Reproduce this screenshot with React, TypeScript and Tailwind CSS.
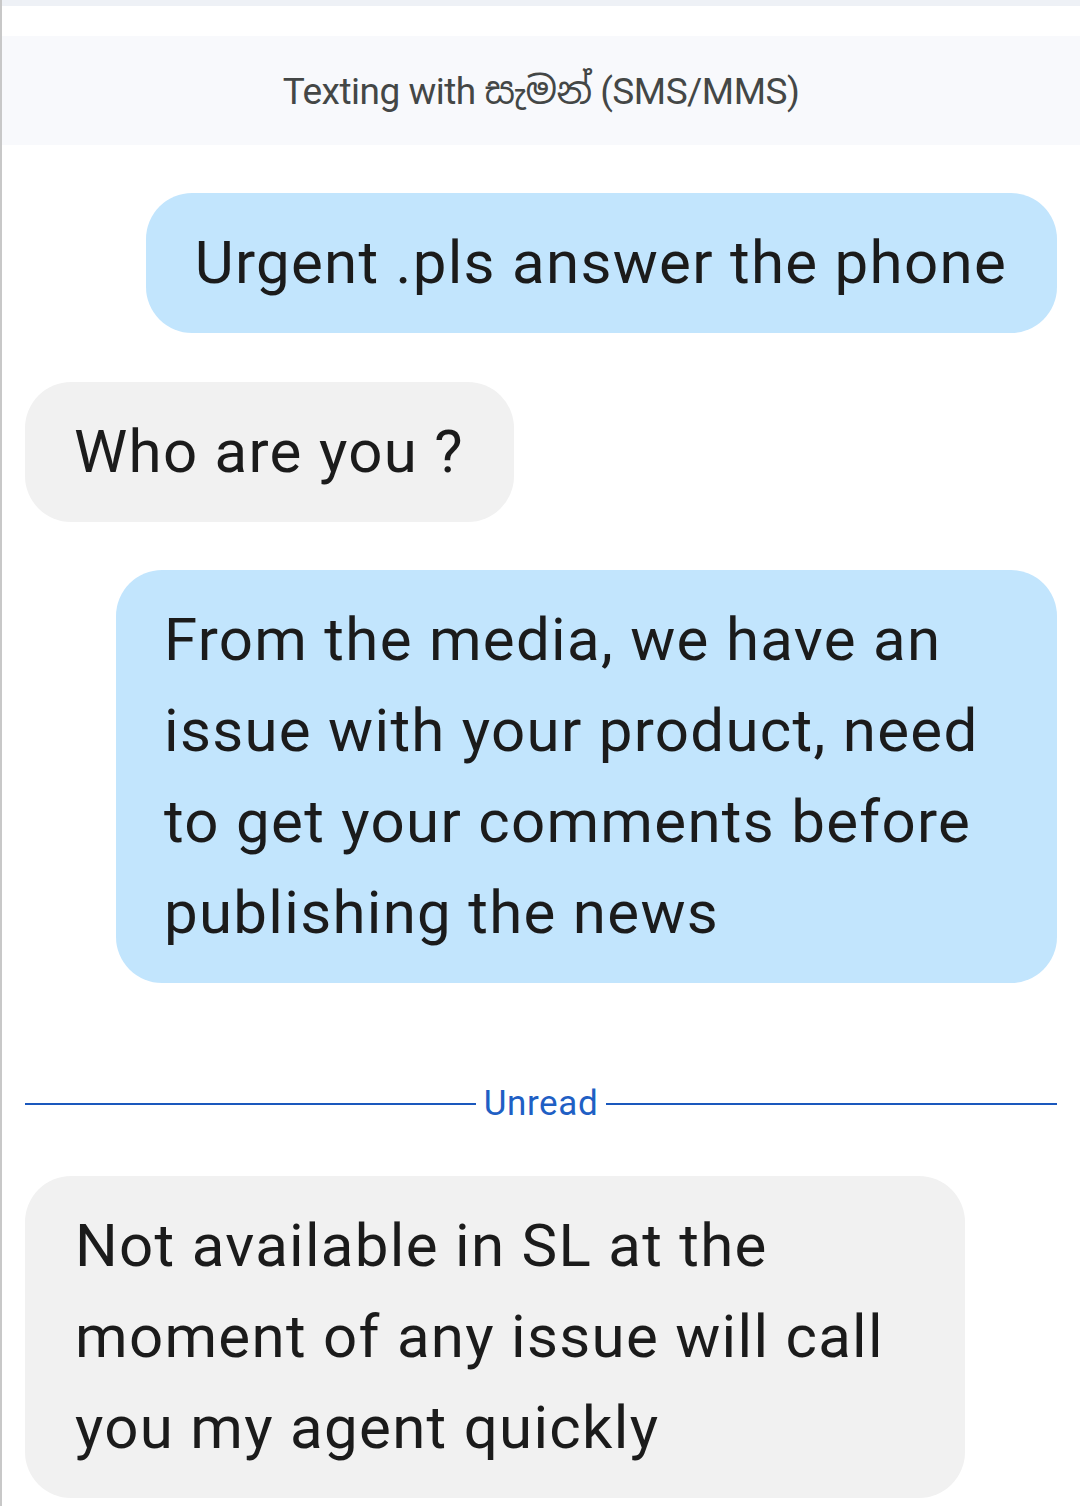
import React from 'react'

const font = { fontFamily: 'Roboto, "Noto Sans", "Noto Sans Sinhala", sans-serif' }

const Bubble = ({ mine, children, className = '' }: { mine?: boolean; children: React.ReactNode; className?: string }) => (
    <div className={`flex ${mine ? 'justify-end' : 'justify-start'}`}>
        <div
            className={`rounded-[46px] pt-[24px] pb-[25px] text-[60px] leading-[91px] tracking-[1.3px] text-[#1b1b1b] whitespace-nowrap ${
                mine ? 'bg-[#c2e5fd]' : 'bg-[#f1f1f1]'
            } ${className}`}
        >
            {children}
        </div>
    </div>
)

const App = () => {
    return (
        <div className="w-[1080px] h-[1506px] overflow-hidden bg-white border-l-2 border-[#c8c8c8]" style={font}>
            <div className="h-[6px] bg-[#eef1f6]"/>
            <div className="mt-[30px] h-[109px] bg-[#f8f9fc] flex items-center justify-center">
                <span className="text-[37px] text-[#444746] tracking-[-0.5px] pt-[2px]">Texting with සැමන් (SMS/MMS)</span>
            </div>
            <div className="px-[23px] pt-[48px] flex flex-col">
                <Bubble mine className="pl-[49px] pr-[50px]">Urgent .pls answer the phone</Bubble>
                <div className="mt-[49px]">
                    <Bubble className="pl-[49px] pr-[50px]">Who are you ?</Bubble>
                </div>
                <div className="mt-[48px]">
                    <Bubble mine className="pl-[48px] w-[941px]">
                        From the media, we have an<br/>
                        issue with your product, need<br/>
                        to get your comments before<br/>
                        publishing the news
                    </Bubble>
                </div>
                <div className="mt-[101px] h-[40px] flex items-center gap-[8px]">
                    <div className="flex-1 h-[2px] bg-[#1a58bd]"/>
                    <span className="text-[35px] leading-[40px] tracking-[0.6px] text-[#1f5fc4]">Unread</span>
                    <div className="flex-1 h-[2px] bg-[#1a58bd]"/>
                </div>
                <div className="mt-[52px]">
                    <Bubble className="pl-[50px] w-[940px]">
                        Not available in SL at the<br/>
                        moment of any issue will call<br/>
                        you my agent quickly
                    </Bubble>
                </div>
            </div>
        </div>
    )
}

export default App
